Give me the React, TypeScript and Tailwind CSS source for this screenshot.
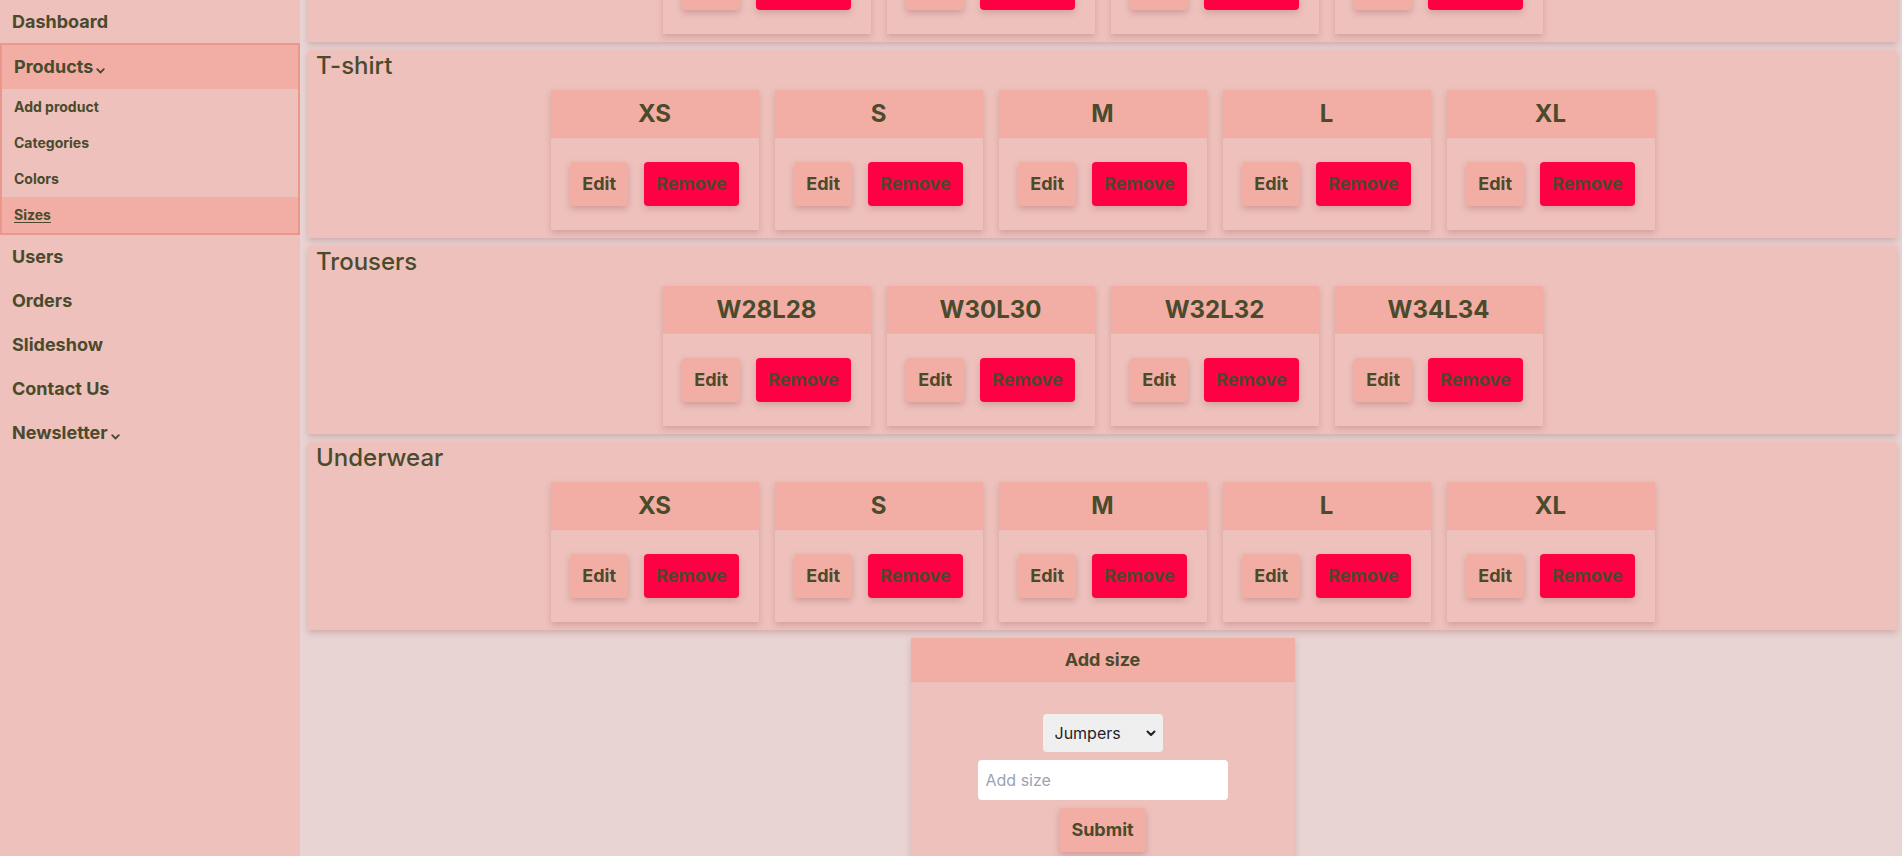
import React, { useLayoutEffect, useRef } from "react";

const sections: { title: string; sizes: string[] }[] = [
  { title: "Jumpers", sizes: ["W28L28", "W30L30", "W32L32", "W34L34"] },
  { title: "T-shirt", sizes: ["XS", "S", "M", "L", "XL"] },
  { title: "Trousers", sizes: ["W28L28", "W30L30", "W32L32", "W34L34"] },
  { title: "Underwear", sizes: ["XS", "S", "M", "L", "XL"] },
];

function Chevron() {
  return (
    <svg width="9" height="6" viewBox="0 0 9 6" className="ml-[3px] mt-[8px]" fill="none">
      <path d="M1.2 1.2 L4.5 4.5 L7.8 1.2" stroke="#4a4a2c" strokeWidth="1.8" strokeLinecap="round" strokeLinejoin="round" />
    </svg>
  );
}

function SizeCard({ name }: { name: string }) {
  return (
    <div className="m-2 w-[208px] bg-[#eec1bc] shadow-[0_3px_6px_rgba(150,90,90,0.3)]">
      <div className="h-12 flex items-center justify-center bg-[#f2aea5] text-2xl font-bold">{name}</div>
      <div className="flex justify-center gap-4 py-6">
        <button className="px-3 py-2 text-lg font-bold leading-7 rounded bg-[#f2aea5] shadow-[0_3px_6px_rgba(150,90,90,0.35)]">
          Edit
        </button>
        <button className="px-3 py-2 text-lg font-bold leading-7 rounded bg-[#ff0044] shadow-[0_3px_6px_rgba(150,90,90,0.3)]">
          Remove
        </button>
      </div>
    </div>
  );
}

export default function App() {
  const mainRef = useRef<HTMLDivElement>(null);
  useLayoutEffect(() => {
    if (mainRef.current) mainRef.current.scrollTop = 154;
  }, []);

  return (
    <div className="flex h-screen overflow-hidden bg-[#e8d4d3] text-[#4a4a2c] font-['Inter','Noto_Sans',sans-serif]">
      <aside className="w-[300px] shrink-0 bg-[#eec1bc] flex flex-col">
        <div className="h-[43px] flex items-center px-3 text-lg font-bold">Dashboard</div>
        <div className="border-2 border-[#ea978e]">
          <div className="h-11 flex items-center px-3 text-lg font-bold bg-[#f2aea5]">
            Products
            <Chevron />
          </div>
          <div className="h-9 flex items-center px-3 text-sm font-bold">Add product</div>
          <div className="h-9 flex items-center px-3 text-sm font-bold">Categories</div>
          <div className="h-9 flex items-center px-3 text-sm font-bold">Colors</div>
          <div className="h-9 flex items-center px-3 text-sm font-bold bg-[#f2aea5]">
            <span className="underline underline-offset-2">Sizes</span>
          </div>
        </div>
        <div className="h-11 flex items-center px-3 text-lg font-bold">Users</div>
        <div className="h-11 flex items-center px-3 text-lg font-bold">Orders</div>
        <div className="h-11 flex items-center px-3 text-lg font-bold">Slideshow</div>
        <div className="h-11 flex items-center px-3 text-lg font-bold">Contact Us</div>
        <div className="h-11 flex items-center px-3 text-lg font-bold">
          Newsletter
          <Chevron />
        </div>
      </aside>
      <div ref={mainRef} className="flex-1 overflow-hidden">
        <div className="flex flex-col gap-2 pl-2 pr-[5px] pt-2 pb-8">
          {sections.map((s) => (
            <section key={s.title} className="bg-[#eec1bc] px-2 shadow-[0_3px_6px_rgba(150,90,90,0.3)]">
              <h2 className="text-2xl leading-8 font-medium">{s.title}</h2>
              <div className="flex flex-wrap justify-center">
                {s.sizes.map((z) => (
                  <SizeCard key={z} name={z} />
                ))}
              </div>
            </section>
          ))}
          <div className="self-center w-96 bg-[#eec1bc] shadow-[0_3px_6px_rgba(150,90,90,0.3)]">
            <div className="h-11 flex items-center justify-center bg-[#f2aea5] text-lg font-bold">Add size</div>
            <div className="flex flex-col items-center gap-2 pt-8 pb-8">
              <div className="relative">
                <select className="appearance-none w-[120px] h-[38px] pl-3 pr-6 rounded bg-[#efefef] text-base text-[#1f1f2a]">
                  <option>Jumpers</option>
                  <option>T-shirt</option>
                  <option>Trousers</option>
                  <option>Underwear</option>
                </select>
                <svg width="10" height="7" viewBox="0 0 10 7" className="pointer-events-none absolute right-[7px] top-[16px]" fill="none">
                  <path d="M1.5 1.5 L5 5 L8.5 1.5" stroke="#1f1f2a" strokeWidth="2" strokeLinecap="round" strokeLinejoin="round" />
                </svg>
              </div>
              <input
                placeholder="Add size"
                className="w-[250px] h-10 px-2 rounded bg-white text-base placeholder:text-[#9aa3b5] outline-none"
              />
              <button className="px-3 py-2 text-lg font-bold leading-7 rounded bg-[#f2aea5] shadow-[0_3px_6px_rgba(150,90,90,0.35)]">
                Submit
              </button>
            </div>
          </div>
        </div>
      </div>
    </div>
  );
}
